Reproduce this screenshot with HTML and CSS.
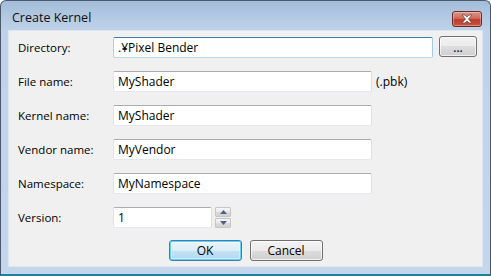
FILE: index.html
```html
<!DOCTYPE html>
<html>
<head>
<meta charset="utf-8">
<link rel="stylesheet" href="styles.css">
</head>
<body>
<div class="window">
  <div class="titlebar">
    <span class="title">Create Kernel</span>
    <div class="close">
      <svg width="16" height="10" viewBox="0 0 16 10">
        <path d="M3 1 L6 1 L8 3 L10 1 L13 1 L9.5 5 L13 9 L10 9 L8 7 L6 9 L3 9 L6.5 5 Z" fill="#ffffff" stroke="#6d4a46" stroke-width="0.8" stroke-linejoin="round"/>
      </svg>
    </div>
  </div>
  <div class="client">
    <div class="form">
      <div class="label">Directory:</div>
      <div class="field">
        <div class="input focus w-dir">.¥Pixel Bender</div>
        <div class="btn browse">...</div>
      </div>
      <div class="label">File name:</div>
      <div class="field">
        <div class="input w-std">MyShader</div>
        <span class="suffix">(.pbk)</span>
      </div>
      <div class="label">Kernel name:</div>
      <div class="field"><div class="input w-std">MyShader</div></div>
      <div class="label">Vendor name:</div>
      <div class="field"><div class="input w-std">MyVendor</div></div>
      <div class="label">Namespace:</div>
      <div class="field"><div class="input w-std">MyNamespace</div></div>
      <div class="label">Version:</div>
      <div class="field">
        <div class="input w-ver">1</div>
        <div class="spin">
          <div class="spin-btn"><svg width="7" height="4" viewBox="0 0 7 4"><path d="M0 4 L3.5 0 L7 4 Z" fill="#4d6185"/></svg></div>
          <div class="spin-btn"><svg width="7" height="4" viewBox="0 0 7 4"><path d="M0 0 L7 0 L3.5 4 Z" fill="#4d6185"/></svg></div>
        </div>
      </div>
    </div>
    <div class="actions">
      <div class="btn push default">OK</div>
      <div class="btn push">Cancel</div>
    </div>
  </div>
</div>
</body>
</html>
```
FILE: styles.css
```css
* { box-sizing: border-box; }
html, body { margin: 0; padding: 0; background: #ffffff; }
body {
  font-family: "Open Sans", "Liberation Sans", sans-serif;
  font-size: 11.5px;
  color: #000000;
}
.window {
  width: 491px;
  height: 276px;
  border: 1px solid #4a5a6c;
  border-bottom: 2px solid #1d7f9c;
  border-radius: 6px 6px 0 0;
  background: linear-gradient(to bottom, #a3bcd9 0px, #b5cbe4 18px, #bed3ea 30px, #c2d6ec 100%);
  padding: 0 7px 7px 7px;
  display: flex;
  flex-direction: column;
}
.titlebar {
  height: 29px;
  display: flex;
  justify-content: space-between;
  align-items: flex-start;
  padding-left: 4px;
  padding-right: 1px;
}
.title {
  font-size: 12.5px;
  color: #101010;
  margin-top: 8px;
  line-height: 17px;
}
.close {
  margin-top: 10px;
  width: 30px;
  height: 16px;
  border: 1px solid #6c2c25;
  border-radius: 3px;
  background: linear-gradient(to bottom, #dc9486 0%, #cf6b5c 45%, #bd3a2a 55%, #c85542 100%);
  box-shadow: inset 0 0 0 1px rgba(255,255,255,0.3);
  display: flex;
  align-items: center;
  justify-content: center;
}
.client {
  flex: 1;
  background: #f0f0f0;
  border: 1px solid #dbe6f2;
  padding: 6px 0 0 9px;
  display: flex;
  flex-direction: column;
}
.form {
  display: grid;
  grid-template-columns: 95px auto;
  grid-auto-rows: 21px;
  row-gap: 13px;
  align-items: center;
}
.label { line-height: 21px; }
.field {
  display: flex;
  align-items: center;
  height: 21px;
}
.input {
  height: 21px;
  background: #ffffff;
  border: 1px solid;
  border-color: #abadb3 #dbdfe6 #e3e9ef #e2e3ea;
  border-radius: 2px;
  padding-left: 4px;
  line-height: 19px;
  font-size: 12px;
}
.input.focus {
  border-color: #3d7bad #a4c9e3 #b7d9ed #b5cfe7;
}
.w-dir { width: 320px; }
.w-std { width: 259px; }
.w-ver { width: 99px; }
.suffix { margin-left: 4px; font-size: 12px; }
.btn {
  border: 1px solid #707070;
  border-radius: 3px;
  background: linear-gradient(to bottom, #f2f2f2 0%, #ebebeb 50%, #dddddd 50%, #cfcfcf 100%);
  box-shadow: inset 0 0 0 1px rgba(255,255,255,0.7);
  display: flex;
  align-items: center;
  justify-content: center;
  font-size: 12px;
}
.browse {
  width: 38px;
  height: 21px;
  margin-left: 6px;
  margin-top: -2px;
  line-height: 1;
  padding-top: 2px;
  font-weight: bold;
  font-size: 11px;
  color: #1d2a4a;
}
.spin {
  margin-left: 3px;
  display: flex;
  flex-direction: column;
  gap: 1px;
  height: 21px;
}
.spin-btn {
  width: 16px;
  height: 10px;
  border: 1px solid #c6c6c6;
  border-radius: 1px;
  background: linear-gradient(to bottom, #f6f6f6 0%, #e9e9e9 50%, #dcdcdc 50%, #d2d2d2 100%);
  display: flex;
  align-items: center;
  justify-content: center;
}
.actions {
  margin-top: 12px;
  display: flex;
  justify-content: center;
  gap: 8px;
  padding-right: 9px;
}
.push {
  width: 73px;
  height: 21px;
}
.default {
  border-color: #3c7fb1;
  background: linear-gradient(to bottom, #e9f4fa 0%, #dbeef8 50%, #c4e3f5 50%, #b1d8ef 100%);
  box-shadow: inset 0 0 0 1px #62d0f7, inset 0 0 0 2px rgba(255,255,255,0.4);
}
```
